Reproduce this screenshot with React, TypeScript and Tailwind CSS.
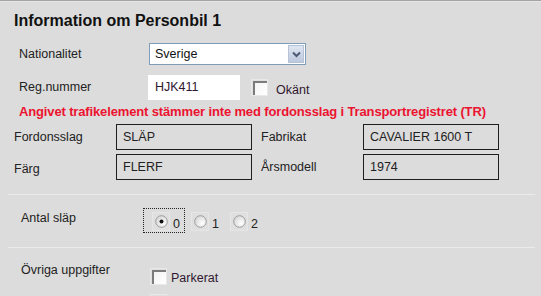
import React from 'react';

function Checkbox() {
  return (
    <div className="flex h-[17px] w-[17px] items-center justify-center border border-[#e8e8e8] bg-[#dedede]">
      <div className="h-[14px] w-[14px] border-l-2 border-t-2 border-[#7c7c7c] bg-gradient-to-br from-[#f4f4f4] to-white" />
    </div>
  );
}

function Radio({ label, checked }: { label: string; checked?: boolean }) {
  return (
    <div className="flex items-end">
      <div className="flex h-[19px] w-[18px] items-start justify-start border border-[#e6e6e6] bg-[#dfdfdf] pl-[2px] pt-[2px]">
        <svg width="13" height="13" viewBox="0 0 13 13">
          <defs>
            <radialGradient id={'rg' + label} cx="0.65" cy="0.65" r="0.6">
              <stop offset="0" stopColor="#ffffff" />
              <stop offset="1" stopColor="#dcdcdc" />
            </radialGradient>
          </defs>
          <circle cx="6.5" cy="6.5" r="5.8" fill={'url(#rg' + label + ')'} stroke="#9c9c9c" strokeWidth="1" />
          {checked && <circle cx="6.5" cy="6.5" r="2" fill="#111" />}
        </svg>
      </div>
      <span className="ml-[3px] text-[12.5px] leading-[13px] text-[#222]">{label}</span>
    </div>
  );
}

function ReadBox({ value }: { value: string }) {
  return (
    <div className="flex h-[26px] w-[136px] items-center border border-[#1e1e1e] pl-[6px] text-[12.5px] text-[#222]">
      {value}
    </div>
  );
}

export default function App() {
  return (
    <div className="h-[296px] w-[541px] overflow-hidden border-t border-[#a3a3a3] bg-[#dcdcdc] font-['Liberation_Sans',Arial,sans-serif] text-[12.5px] text-[#222]">
      <div className="h-px bg-[#e6e6e6]" />
      <div className="pl-[14px] pt-[10px] text-[16px] font-bold leading-[18px] text-[#111]">
        Information om Personbil 1
      </div>

      {/* Nationalitet */}
      <div className="mt-[13px] flex h-[22px] items-center pl-[19px]">
        <div className="w-[130px]">Nationalitet</div>
        <div className="flex h-[22px] w-[157px] items-center border border-[#7f9db9] bg-white">
          <span className="flex-1 pl-[5px] text-[#111]">Sverige</span>
          <div className="mr-px flex h-[18px] w-[16px] items-center justify-center border border-[#b6c2d8] bg-gradient-to-b from-[#dfe6f2] to-[#bcc8dd]">
            <svg width="9" height="7" viewBox="0 0 9 7">
              <path d="M1 1.5 L4.5 5 L8 1.5" fill="none" stroke="#4d5a72" strokeWidth="2" />
            </svg>
          </div>
        </div>
      </div>

      {/* Reg.nummer */}
      <div className="mt-[10px] flex h-[25px] items-center pl-[19px]">
        <div className="w-[129px]">Reg.nummer</div>
        <div className="flex h-[25px] w-[92px] items-center bg-white pl-[7px] text-[#301830]">HJK411</div>
        <div className="ml-[11px]">
          <Checkbox />
        </div>
        <span className="ml-[8px] mt-[6px] text-[#301830]">Okänt</span>
      </div>

      <div className="mt-[4px] pl-[19px] text-[13px] font-bold leading-[16px] tracking-[-0.14px] text-[#ec1330]">
        Angivet trafikelement stämmer inte med fordonsslag i Transportregistret (TR)
      </div>

      {/* Fordonsdata */}
      <div className="mt-[4px] flex items-center pl-[14px]">
        <div className="w-[102px]">Fordonsslag</div>
        <ReadBox value="SLÄP" />
        <div className="ml-[9px] w-[102px]">Fabrikat</div>
        <ReadBox value="CAVALIER 1600 T" />
      </div>
      <div className="mt-[4px] flex items-center pl-[14px]">
        <div className="mt-[5px] w-[102px]">Färg</div>
        <ReadBox value="FLERF" />
        <div className="ml-[9px] w-[102px]">Årsmodell</div>
        <ReadBox value="1974" />
      </div>

      <div className="ml-[8px] mt-[14px] h-px w-[527px] bg-[#ebebeb]" />

      {/* Antal släp */}
      <div className="mt-[13px] flex items-start pl-[21px]">
        <div className="mt-[2px] w-[122px] leading-[16px]">Antal släp</div>
        <div className="flex h-[25px] items-end border border-dotted border-[#222] pb-[1px] pl-[8px] pr-[4px]">
          <Radio label="0" checked />
        </div>
        <div className="ml-[6px] flex h-[25px] items-end pb-[2px]">
          <Radio label="1" />
        </div>
        <div className="ml-[11px] flex h-[25px] items-end pb-[2px]">
          <Radio label="2" />
        </div>
      </div>

      <div className="ml-[8px] mt-[14px] h-px w-[527px] bg-[#ebebeb]" />

      {/* Övriga uppgifter */}
      <div className="mt-[14px] flex items-start pl-[21px]">
        <div className="w-[129px] leading-[16px]">Övriga uppgifter</div>
        <div className="mt-[6px] flex flex-col gap-[9px]">
          <div className="flex items-end">
            <Checkbox />
            <span className="ml-[4px] leading-[14px] text-[#301830]">Parkerat</span>
          </div>
          <Checkbox />
        </div>
      </div>
    </div>
  );
}
